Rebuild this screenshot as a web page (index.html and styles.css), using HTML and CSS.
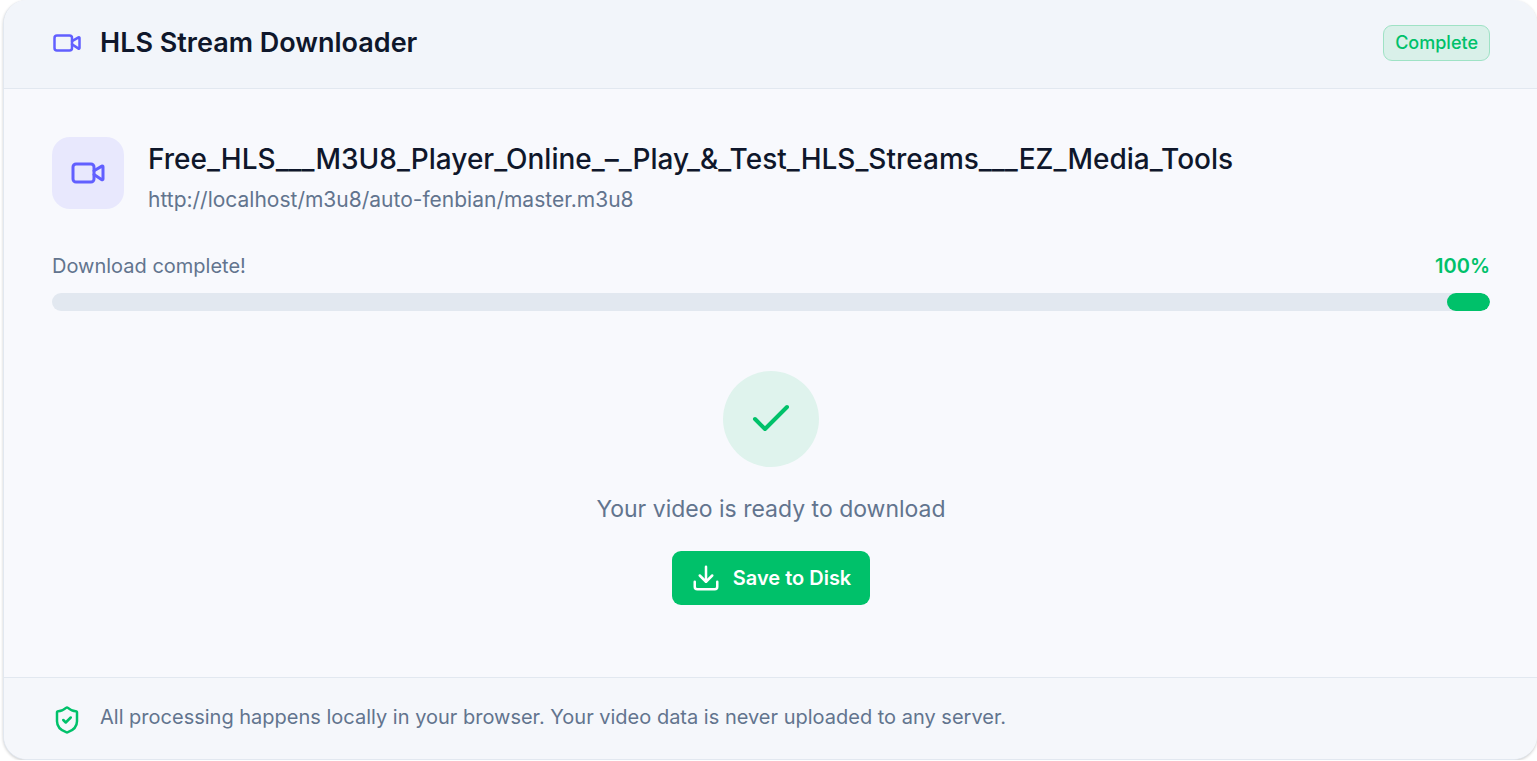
FILE: index.html
```html
<!DOCTYPE html>
<html lang="en">
<head>
    <meta charset="UTF-8">
    <meta name="viewport" content="width=device-width, initial-scale=1.0">
    <title>HLS Stream Downloader</title>
    <link rel="stylesheet" href="styles.css">
</head>
<body>

<main class="card">
    <header class="card-header">
        <svg class="icon icon-video" viewBox="0 0 24 24" aria-hidden="true">
            <path d="m16 13 5.223 3.482a.5.5 0 0 0 .777-.416V7.870a.5.5 0 0 0-.752-.432L16 10.500"/>
            <rect x="2" y="6" width="14" height="12" rx="2"/>
        </svg>
        <h1>HLS Stream Downloader</h1>
        <span class="badge">Complete</span>
    </header>

    <section class="card-body">
        <div class="file">
            <div class="file-tile">
                <svg class="icon" viewBox="0 0 24 24" aria-hidden="true">
                    <path d="m16 13 5.223 3.482a.5.5 0 0 0 .777-.416V7.870a.5.5 0 0 0-.752-.432L16 10.500"/>
                    <rect x="2" y="6" width="14" height="12" rx="2"/>
                </svg>
            </div>
            <div class="file-info">
                <h2>Free_HLS___M3U8_Player_Online_–_Play_&amp;_Test_HLS_Streams___EZ_Media_Tools</h2>
                <p>http://localhost/m3u8/auto-fenbian/master.m3u8</p>
            </div>
        </div>

        <div class="status">
            <div class="status-row">
                <span id="statusText">Download complete!</span>
                <span class="percent">100%</span>
            </div>
            <div class="progress" role="progressbar" aria-labelledby="statusText" aria-valuemin="0" aria-valuemax="100" aria-valuenow="100">
                <div class="progress-bar"></div>
            </div>
        </div>

        <div class="ready">
            <div class="check">
                <svg class="icon" viewBox="0 0 24 24" aria-hidden="true">
                    <path d="M20 6 9 17l-5-5"/>
                </svg>
            </div>
            <p>Your video is ready to download</p>
            <button type="button" class="save">
                <svg class="icon" viewBox="0 0 24 24" aria-hidden="true">
                    <path d="M21 15v4a2 2 0 0 1-2 2H5a2 2 0 0 1-2-2v-4"/>
                    <path d="m7 10 5 5 5-5"/>
                    <path d="M12 15V3"/>
                </svg>
                Save to Disk
            </button>
        </div>
    </section>

    <footer class="card-footer">
        <svg class="icon icon-shield" viewBox="0 0 24 24" aria-hidden="true">
            <path d="M20 13c0 5-3.500 7.500-7.660 8.950a1 1 0 0 1-.67-.01C7.500 20.500 4 18 4 13V6a1 1 0 0 1 1-1c2 0 4.500-1.200 6.240-2.720a1.170 1.170 0 0 1 1.520 0C14.510 3.810 17 5 19 5a1 1 0 0 1 1 1z"/>
            <path d="m9 12 2 2 4-4"/>
        </svg>
        <p>All processing happens locally in your browser. Your video data is never uploaded to any server.</p>
    </footer>
</main>

</body>
</html>
```
FILE: styles.css
```css
* {
    box-sizing: border-box;
}
body {
    margin: 0;
    font-family: Inter, "Liberation Sans", sans-serif;
    font-size: 20px;
    line-height: 30px;
    color: #62748e;
    background-color: #ffffff;
}
h1, h2, p {
    margin: 0;
}
.card {
    margin-left: 3px;
    background-color: #f8f9fd;
    border: 1px solid #e2e8f0;
    border-top: none;
    border-right: none;
    border-radius: 24px;
    overflow: hidden;
    box-shadow: 0 1px 3px rgba(0, 0, 0, 0.2);
}
.icon {
    width: 30px;
    height: 30px;
    flex-shrink: 0;
    fill: none;
    stroke: currentColor;
    stroke-width: 2;
    stroke-linecap: round;
    stroke-linejoin: round;
}
.icon-video {
    color: #615fff;
}
.card-header {
    display: flex;
    align-items: center;
    gap: 18px;
    padding: 25px 47px 27px 48px;
    background-color: #f2f5fa;
    border-bottom: 1px solid #e2e8f0;
}
h1 {
    font-size: 27px;
    line-height: 36px;
    font-weight: 600;
    color: #0f172b;
}
.badge {
    margin-left: auto;
    padding: 0 11px;
    font-size: 18px;
    line-height: 34px;
    font-weight: 500;
    color: #00c16a;
    background-color: #d9f0e9;
    border: 1px solid #9fe2c5;
    border-radius: 9px;
}
.card-body {
    padding: 48px 47px 72px 48px;
}
.file {
    display: flex;
    align-items: flex-start;
    gap: 24px;
}
.file-tile {
    display: flex;
    align-items: center;
    justify-content: center;
    flex-shrink: 0;
    width: 72px;
    height: 72px;
    color: #615fff;
    background-color: #e8e8fd;
    border-radius: 18px;
}
.file-tile .icon {
    width: 36px;
    height: 36px;
}
.file-info {
    min-width: 0;
    overflow-wrap: anywhere;
}
h2 {
    font-size: 28px;
    line-height: 45px;
    font-weight: 500;
    color: #0f172b;
}
.file-info p {
    font-size: 21px;
    line-height: 36px;
}
.status {
    margin-top: 33px;
}
.status-row {
    display: flex;
    justify-content: space-between;
}
.percent {
    font-weight: 600;
    color: #00c16a;
}
.progress {
    display: flex;
    justify-content: flex-end;
    height: 18px;
    margin-top: 12px;
    background-color: #e2e8f0;
    border-radius: 9px;
    overflow: hidden;
}
.progress-bar {
    width: 3%;
    background-color: #00c16a;
    border-radius: 9px;
}
.ready {
    display: flex;
    flex-direction: column;
    align-items: center;
    gap: 24px;
    margin-top: 60px;
}
.check {
    display: flex;
    align-items: center;
    justify-content: center;
    width: 96px;
    height: 96px;
    color: #00c16a;
    background-color: #dff3ed;
    border-radius: 50%;
}
.check .icon {
    width: 48px;
    height: 48px;
}
.ready p {
    font-size: 23px;
    line-height: 36px;
}
.save {
    display: flex;
    align-items: center;
    gap: 12px;
    padding: 12px 19px;
    font: inherit;
    font-weight: 600;
    color: #ffffff;
    background-color: #00c16a;
    border: none;
    border-radius: 9px;
    cursor: pointer;
}
.save:hover {
    background-color: #00ad5f;
}
.card-footer {
    display: flex;
    align-items: flex-start;
    gap: 18px;
    padding: 24px 48px;
    background-color: #f5f7fb;
    border-top: 1px solid #e2e8f0;
}
.icon-shield {
    margin-top: 3px;
    color: #00c16a;
}
```
